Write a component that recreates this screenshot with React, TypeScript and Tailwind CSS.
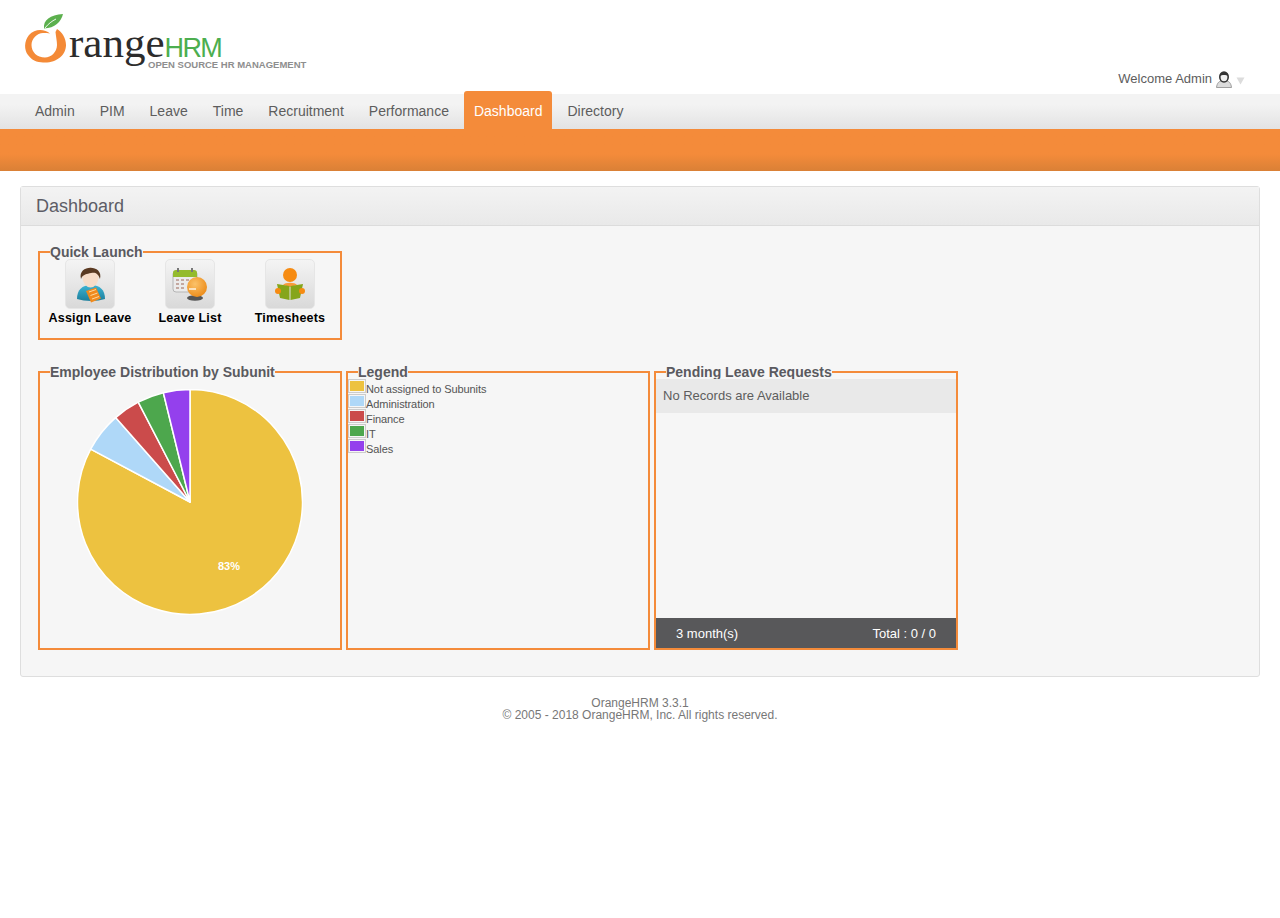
const font = "font-['Liberation_Sans',Arial,sans-serif]";

function Logo() {
  return (
    <div className="relative w-[290px] h-[70px]">
      <svg width="42" height="52" viewBox="-1 0 42 52" className="absolute -left-[1px] top-0">
        <path d="M19 15.5 C18 7 25 2 38 1 C36 9 30 15 19 15.5 Z" fill="#5cb04e" />
        <path d="M20 15 C23 11 27 8 31 6" stroke="#ffffff" strokeWidth="0.9" fill="none" />
        <path d="M25 20.5 C20 16 10 15 4 22 C-1 28 -1 37 3 42 C8 49 15 49.5 20 49.5 C32 49.5 41 42 41 32 C41 25 37 19 32 16 C31.5 17 31 18 30.5 19 C31 24 32 28 32 32 C32 39 26 44.5 20 44.5 C12 44.5 6.5 39 6.5 32 C6.5 26 12 20 18 20 C21 20 23 20 25 20.5 Z" fill="#f48a37" />
      </svg>
      <div className="absolute left-[44px] top-[13px] flex items-baseline">
        <span className="font-['Liberation_Serif',serif] text-[43px] text-[#2c2c2c] leading-[34px]">range</span>
        <span className="font-['Liberation_Sans',Arial,sans-serif] text-[27px] text-[#4cae4f] tracking-[-1.6px] leading-[34px]">HRM</span>
      </div>
      <div className="absolute left-[123px] top-[47px] font-['Liberation_Sans',Arial,sans-serif] font-bold text-[9.5px] leading-[10px] text-[#8e8e8e] whitespace-nowrap">
        OPEN SOURCE HR MANAGEMENT
      </div>
    </div>
  );
}

function IconBox({ children }: { children: React.ReactNode }) {
  return (
    <div className="w-[50px] h-[50px] rounded-[5px] border border-[#e6e6e6] bg-gradient-to-b from-[#f4f4f4] to-[#d9d9d9] flex items-center justify-center">
      <svg width="40" height="40" viewBox="0 0 40 40">{children}</svg>
    </div>
  );
}

function Launch({ label, children }: { label: string; children: React.ReactNode }) {
  return (
    <div className="w-[100px] flex flex-col items-center">
      <IconBox>{children}</IconBox>
      <div className="font-bold text-[12.5px] leading-[14px] tracking-[0.2px] text-black mt-[2px] whitespace-nowrap">{label}</div>
    </div>
  );
}

function Field({ title, className, children }: { title: string; className: string; children: React.ReactNode }) {
  return (
    <fieldset className={`border-2 border-[#f48b3a] ${className}`}>
      <legend className="ml-[10px] px-0 font-bold text-[14px] leading-[12px] text-[#5a5a5f] whitespace-nowrap">{title}</legend>
      {children}
    </fieldset>
  );
}

const slices = [
  { from: 0, to: 298, color: "#edc240" },
  { from: 298, to: 318.6, color: "#afd8f8" },
  { from: 318.6, to: 332.6, color: "#cb4b4b" },
  { from: 332.6, to: 346.3, color: "#4da74d" },
  { from: 346.3, to: 360, color: "#9440ed" },
];

function pt(deg: number, r: number) {
  const a = (deg * Math.PI) / 180;
  return `${(113 + r * Math.sin(a)).toFixed(2)} ${(113 - r * Math.cos(a)).toFixed(2)}`;
}

function Pie() {
  return (
    <div className="relative w-[226px] h-[226px]">
      <svg width="226" height="226" viewBox="0 0 226 226">
        {slices.map((s) => (
          <path
            key={s.color}
            d={`M113 113 L${pt(s.from, 112.5)} A112.5 112.5 0 ${s.to - s.from > 180 ? 1 : 0} 1 ${pt(s.to, 112.5)} Z`}
            fill={s.color}
            stroke="#ffffff"
            strokeWidth="1.5"
            strokeLinejoin="round"
          />
        ))}
      </svg>
      <span className="absolute left-[141px] top-[171px] font-bold text-[11px] leading-[13px] text-white">83%</span>
    </div>
  );
}

const legend: [string, string][] = [
  ["#edc240", "Not assigned to Subunits"],
  ["#afd8f8", "Administration"],
  ["#cb4b4b", "Finance"],
  ["#4da74d", "IT"],
  ["#9440ed", "Sales"],
];

const nav = ["Admin", "PIM", "Leave", "Time", "Recruitment", "Performance", "Dashboard", "Directory"];

export default function App() {
  return (
    <div className={`${font} bg-white min-h-[918px] w-[1280px] text-[#5d5d5d]`}>
      <header className="h-[94px] flex justify-between pl-[25px] pr-[35px] pt-[13px]">
        <Logo />
        <div className="flex items-center gap-[4px] h-[18px] mt-[57px] text-[13px] text-[#5d5d5d]">
          <span>Welcome Admin</span>
          <svg width="16" height="17" viewBox="0 0 16 17">
            <path d="M0.5 16.5 C1 12 3 10.5 5 10 L11 10 C13 10.5 15 12 15.5 16.5 Z" fill="#dcdcdc" stroke="#8a8a8a" strokeWidth="0.8" />
            <ellipse cx="8" cy="6" rx="4.2" ry="5" fill="#f0f0f0" stroke="#333333" strokeWidth="1.6" />
            <path d="M3.8 5 C4 -0.5 12 -0.5 12.2 5 C10 3.5 6 3.5 3.8 5 Z" fill="#333333" />
          </svg>
          <svg width="9" height="8" viewBox="0 0 9 8" className="mt-[3px]">
            <path d="M0.5 0.5 H8.5 L4.5 7.5 Z" fill="#dcdcdc" />
          </svg>
        </div>
      </header>

      <nav className="h-[35px] bg-gradient-to-b from-[#f3f3f3] from-30% to-[#e3e3e3] flex items-end gap-[5px] pl-[25px] text-[14px]">
        {nav.map((n) => (
          <div
            key={n}
            className={
              n === "Dashboard"
                ? "h-[38px] px-[10px] bg-[#f48b3a] text-white rounded-t-[3px] flex items-center pt-[2px]"
                : "h-[35px] px-[10px] flex items-center text-[#5d5d5d]"
            }
          >
            {n}
          </div>
        ))}
      </nav>
      <div className="h-[42px] bg-gradient-to-b from-[#f48b3a] from-60% to-[#da8036]" />

      <main className="mx-[20px] mt-[15px] h-[491px] border border-[#dedede] rounded-[3px] bg-[#f6f6f6]">
        <div className="h-[39px] bg-gradient-to-b from-[#f3f3f3] to-[#e9e9e9] border-b border-[#dcdcdc] pl-[15px] flex items-center text-[18px] text-[#5d5d66]">
          Dashboard
        </div>
        <div className="pl-[17px] pt-[20px]">
          <Field title="Quick Launch" className="w-[304px] h-[94px] flex">
            <div className="flex mt-[1px]">
              <Launch label="Assign Leave">
                <defs>
                  <linearGradient id="shirt" x1="0" y1="0" x2="0" y2="1">
                    <stop offset="0" stopColor="#3db4d4" />
                    <stop offset="1" stopColor="#1d7f9c" />
                  </linearGradient>
                </defs>
                <path d="M7 35 C7 26 12 21 21 21 C30 21 35 26 35 35 C27 37.5 15 37.5 7 35 Z" fill="url(#shirt)" />
                <ellipse cx="20.5" cy="13.5" rx="8" ry="10" fill="#f7dcc8" />
                <path d="M11 15 C7 0 34 0 30 15 C28 9 25 8 21 9 C17 10 13 10 11 15 Z" fill="#5a3a22" />
                <path d="M16 27 L26 23.5 L31 34.5 L21 38.5 Z" fill="#f08a1d" />
                <path d="M19 28 L26 25.5 M20.5 31.5 L27.5 29 M22 35 L29 32.5" stroke="#fbd9a2" strokeWidth="1" />
              </Launch>
              <Launch label="Leave List">
                <defs>
                  <radialGradient id="ball" cx="0.4" cy="0.35" r="0.7">
                    <stop offset="0" stopColor="#fbc26a" />
                    <stop offset="1" stopColor="#ec8a17" />
                  </radialGradient>
                </defs>
                <rect x="3" y="7" width="24" height="21" rx="3" fill="#ebebeb" stroke="#b5b5b5" />
                <path d="M3 13 V9 Q3 6 6 6 H24 Q27 6 27 9 V13 Z" fill="#94bb2c" />
                <rect x="7" y="4" width="2" height="4" fill="#777777" />
                <rect x="21" y="4" width="2" height="4" fill="#777777" />
                <path d="M6 16 H9 M11 16 H14 M16 16 H19 M6 20 H9 M11 20 H14 M6 24 H9 M11 24 H14" stroke="#c4a8a0" strokeWidth="2" />
                <ellipse cx="25" cy="34" rx="8" ry="2.8" fill="#555555" />
                <circle cx="27" cy="23" r="10" fill="url(#ball)" />
                <path d="M19 25 H26" stroke="#ffffff" strokeWidth="1.3" />
              </Launch>
              <Launch label="Timesheets">
                <circle cx="20" cy="11" r="7" fill="#f68b12" />
                <path d="M13 21 C15 18 25 18 27 21 L20 23 Z" fill="#f89a3a" />
                <path d="M7 20 L19.5 22 V36 L10 34 Z" fill="#85a51a" />
                <path d="M33 20 L20.5 22 V36 L30 34 Z" fill="#85a51a" />
                <circle cx="8" cy="27" r="3" fill="#f68b12" />
                <circle cx="32" cy="27" r="3" fill="#f68b12" />
              </Launch>
            </div>
          </Field>

          <div className="flex gap-[4px] mt-[26px]">
            <Field title="Employee Distribution by Subunit" className="w-[304px] h-[284px] flex justify-center">
              <div className="pt-[11px]">
                <Pie />
              </div>
            </Field>
            <Field title="Legend" className="w-[304px] h-[284px]">
              <div className="pt-[1px]">
                {legend.map(([c, l]) => (
                  <div key={l} className="flex h-[15px] items-start">
                    <span className="w-[18px] h-[14px] border border-[#cccccc] p-[1px] shrink-0">
                      <span className="block w-full h-full" style={{ backgroundColor: c }} />
                    </span>
                    <span className="text-[11px] leading-[15px] mt-[3px] tracking-[-0.08px] text-[#545454]">{l}</span>
                  </div>
                ))}
              </div>
            </Field>
            <Field title="Pending Leave Requests" className="w-[304px] h-[284px] flex flex-col">
              <div className="h-[34px] mt-[1px] bg-[#e9e9e9] pl-[7px] flex items-center text-[13px] text-[#5d5d5d]">
                No Records are Available
              </div>
              <div className="flex-1" />
              <div className="h-[30px] bg-[#58585a] px-[20px] pt-[2px] flex items-center justify-between text-[13px] text-white">
                <span>3 month(s)</span>
                <span>Total : 0 / 0</span>
              </div>
            </Field>
          </div>
        </div>
      </main>

      <footer className="mt-[20px] text-center text-[12px] leading-[12px] text-[#777777]">
        <div>OrangeHRM 3.3.1</div>
        <div>© 2005 - 2018 OrangeHRM, Inc. All rights reserved.</div>
      </footer>
    </div>
  );
}
